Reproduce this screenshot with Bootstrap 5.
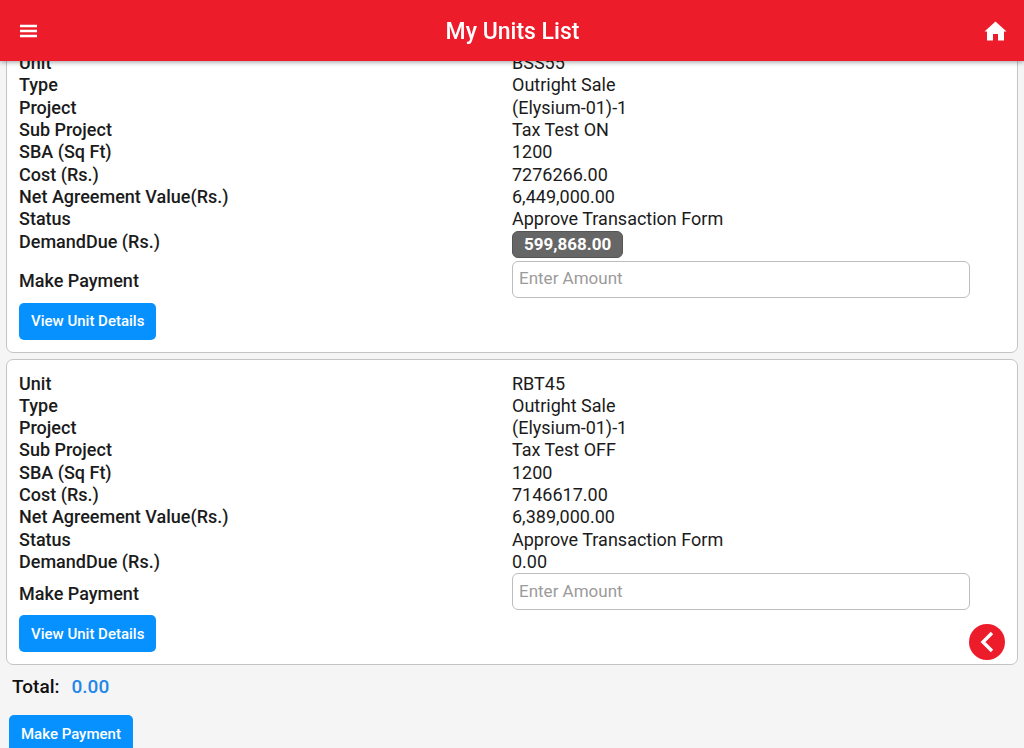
<!DOCTYPE html>
<html lang="en">
<head>
<meta charset="utf-8">
<meta name="viewport" content="width=device-width, initial-scale=1">
<title>My Units List</title>
<link href="https://cdn.jsdelivr.net/npm/bootstrap@5.3.0/dist/css/bootstrap.min.css" rel="stylesheet">
<style>
  body { font-family: Roboto, "Liberation Sans", sans-serif; background: #f5f5f5; color: #1b1b1b; font-size: 18px; line-height: 1.24; }
  .app-bar { height: 61px; background: #ed1c2b; box-shadow: 0 1px 5px rgba(0,0,0,.4); padding: 0 17px 0 19px; }
  .app-bar h1 { font-size: 23px; font-weight: 500; padding: 2px 0 0 3px; }
  .app-bar button, .app-bar a { line-height: 0; }
  .units { padding: 38px 6px 0; }
  .unit-card { border: 1px solid #c4c4c4; border-radius: 7px; padding: 13px 12px 12px; margin-bottom: 6px; background: #fff; }
  .unit-card dt, .unit-card label, .total { font-weight: 500; }
  .unit-card label { padding-top: 5px; }
  .due-badge { display: inline-block; background: #666; border: 1px solid #555; color: #fff; font-size: 17px; line-height: 21px; font-weight: 700; border-radius: 6px; padding: 2px 11px; margin-bottom: 3px; }
  .amount { width: 93%; height: 37px; border: 1px solid #bdbdbd; border-radius: 6px; padding: 0 6px 2px; font-size: 17px; }
  .amount::placeholder { color: #9b9b9b; }
  .btn-unit { background: #0791ff; color: #fff; border: 0; border-radius: 5px; height: 37px; padding: 1px 12px 0; font-size: 15px; font-weight: 500; }
  .btn-unit:hover { background: #057fe0; color: #fff; }
  .unit-card .btn-unit { margin-top: 5px; }
  .total { font-size: 19px; line-height: 24px; padding: 4px 6px 0; color: #111; gap: 12px; }
  .total output { color: #1f87e8; }
  .pay-all { margin: 16px 3px 0; }
  .side-toggle { right: 19px; bottom: 88px; width: 36px; height: 36px; background: #ed1c2b; }
</style>
</head>
<body>
<div class="vh-100 overflow-hidden">
  <header class="app-bar fixed-top d-flex align-items-center justify-content-between text-white">
    <button type="button" class="btn p-0 border-0 text-white" aria-label="Menu">
      <svg width="19" height="14" viewBox="0 0 19 14" fill="currentColor"><path d="M1 .7h17v2.600H1zM1 5.700h17v2.600H1zM1 10.700h17v2.600H1z"/></svg>
    </button>
    <h1 class="m-0">My Units List</h1>
    <a href="#" class="text-white" aria-label="Home">
      <svg width="23" height="20" viewBox="0 0 23 20" fill="currentColor"><path d="M11.500 .5 22.500 10.500H20V19.500H14V13H9V19.500H3V10.500H.5z"/></svg>
    </a>
  </header>

  <main class="units">
    <section class="unit-card">
      <dl class="row g-0 m-0">
        <dt class="col-6">Unit</dt><dd class="col-6 m-0">BSS55</dd>
        <dt class="col-6">Type</dt><dd class="col-6 m-0">Outright Sale</dd>
        <dt class="col-6">Project</dt><dd class="col-6 m-0">(Elysium-01)-1</dd>
        <dt class="col-6">Sub Project</dt><dd class="col-6 m-0">Tax Test ON</dd>
        <dt class="col-6">SBA (Sq Ft)</dt><dd class="col-6 m-0">1200</dd>
        <dt class="col-6">Cost (Rs.)</dt><dd class="col-6 m-0">7276266.00</dd>
        <dt class="col-6">Net Agreement Value(Rs.)</dt><dd class="col-6 m-0">6,449,000.00</dd>
        <dt class="col-6">Status</dt><dd class="col-6 m-0">Approve Transaction Form</dd>
        <dt class="col-6">DemandDue (Rs.)</dt><dd class="col-6 m-0 d-flex"><span class="due-badge">599,868.00</span></dd>
      </dl>
      <div class="row g-0 align-items-center">
        <label class="col-6" for="amount-1">Make Payment</label>
        <div class="col-6 d-flex"><input id="amount-1" class="amount" type="text" placeholder="Enter Amount"></div>
      </div>
      <button type="button" class="btn btn-unit d-block">View Unit Details</button>
    </section>

    <section class="unit-card">
      <dl class="row g-0 m-0">
        <dt class="col-6">Unit</dt><dd class="col-6 m-0">RBT45</dd>
        <dt class="col-6">Type</dt><dd class="col-6 m-0">Outright Sale</dd>
        <dt class="col-6">Project</dt><dd class="col-6 m-0">(Elysium-01)-1</dd>
        <dt class="col-6">Sub Project</dt><dd class="col-6 m-0">Tax Test OFF</dd>
        <dt class="col-6">SBA (Sq Ft)</dt><dd class="col-6 m-0">1200</dd>
        <dt class="col-6">Cost (Rs.)</dt><dd class="col-6 m-0">7146617.00</dd>
        <dt class="col-6">Net Agreement Value(Rs.)</dt><dd class="col-6 m-0">6,389,000.00</dd>
        <dt class="col-6">Status</dt><dd class="col-6 m-0">Approve Transaction Form</dd>
        <dt class="col-6">DemandDue (Rs.)</dt><dd class="col-6 m-0">0.00</dd>
      </dl>
      <div class="row g-0 align-items-center">
        <label class="col-6" for="amount-2">Make Payment</label>
        <div class="col-6 d-flex"><input id="amount-2" class="amount" type="text" placeholder="Enter Amount"></div>
      </div>
      <button type="button" class="btn btn-unit d-block">View Unit Details</button>
    </section>

    <div class="total d-flex">Total:<output>0.00</output></div>
    <button type="button" class="btn btn-unit pay-all">Make Payment</button>
  </main>

  <button type="button" class="side-toggle btn position-fixed rounded-circle border-0 p-0 d-flex align-items-center justify-content-center text-white" aria-label="Open side panel">
    <svg width="36" height="36" viewBox="0 0 36 36" fill="none" stroke="currentColor" stroke-width="3.400"><path d="M23 9 14 18l9 9"/></svg>
  </button>
</div>
<script src="https://cdn.jsdelivr.net/npm/bootstrap@5.3.0/dist/js/bootstrap.bundle.min.js"></script>
</body>
</html>
